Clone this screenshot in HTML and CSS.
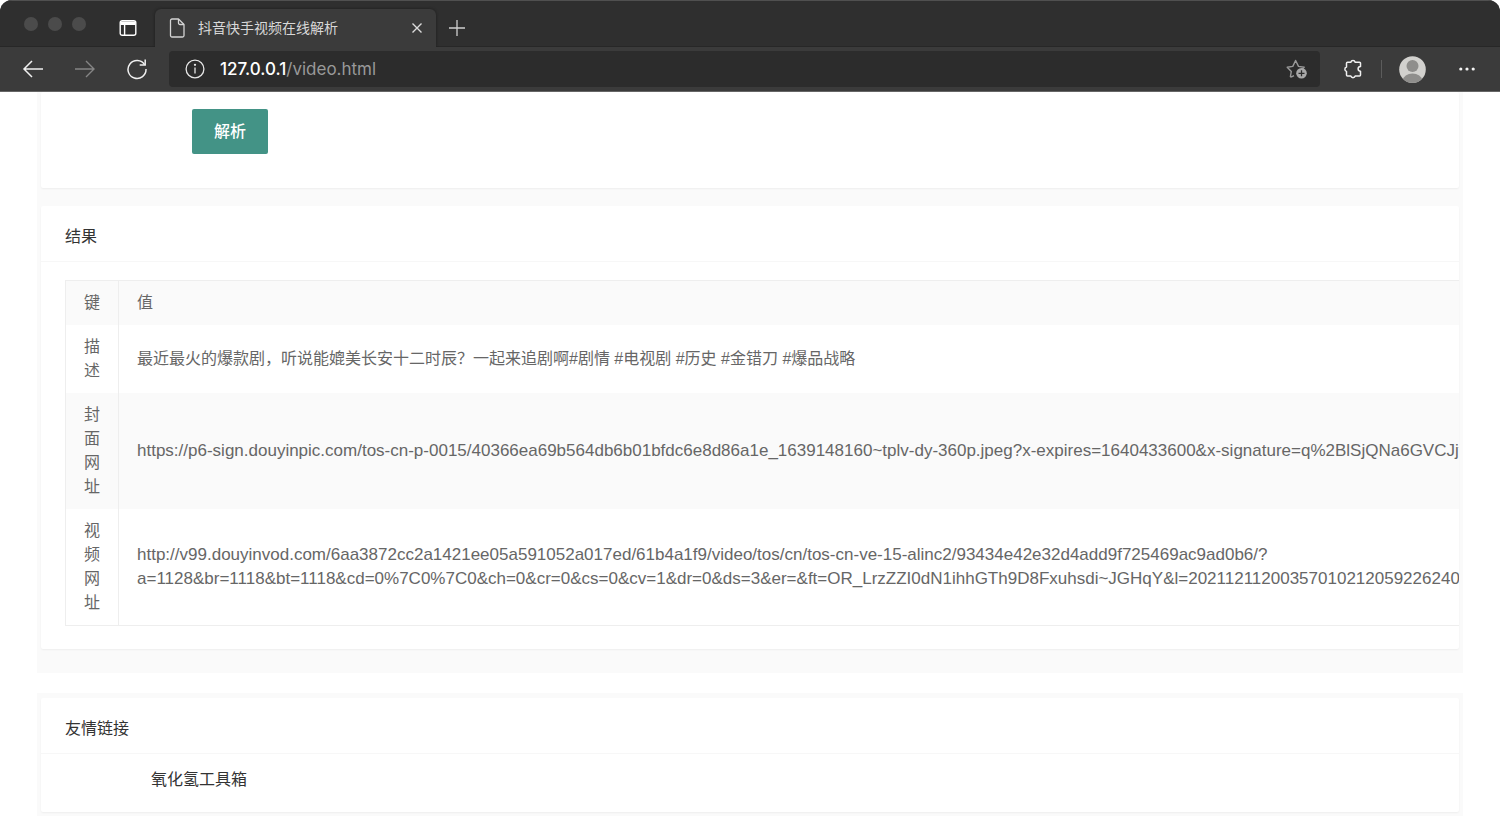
FILE: index.html
```html
<!DOCTYPE html>
<html lang="zh-CN">
<head>
<meta charset="utf-8">
<title>抖音快手视频在线解析</title>
<link rel="stylesheet" href="styles.css">
</head>
<body>
<div class="window">
  <header class="chrome">
    <div class="tabstrip">
      <div class="lights"><span class="light"></span><span class="light"></span><span class="light"></span></div>
      <button class="icon-btn panel-btn" aria-label="标签页操作">
        <svg width="18" height="18" viewBox="0 0 18 18" fill="none" stroke="#fff" stroke-width="1.4"><rect x="1.2" y="1.7" width="15.6" height="14.6" rx="2"/><path d="M1.5 3.5h15M1.5 4.8h15" stroke-width="2.2"/><path d="M5.6 5v11"/></svg>
      </button>
      <div class="tab">
        <svg width="16" height="20" viewBox="0 0 16 20" fill="none" stroke="#d4d4d4" stroke-width="1.3" stroke-linejoin="round"><path d="M3 1h6.5L15 6.500V17.500a1.500 1.500 0 0 1-1.500 1.500H3A1.500 1.500 0 0 1 1.500 17.500V2.500A1.500 1.500 0 0 1 3 1z"/><path d="M9.500 1v4a1.500 1.500 0 0 0 1.500 1.500h4"/></svg>
        <span class="tab-title">抖音快手视频在线解析</span>
        <button class="icon-btn" aria-label="关闭标签页">
          <svg width="12" height="12" viewBox="0 0 12 12" stroke="#dcdcdc" stroke-width="1.4"><path d="M1.500 1.500l9 9M10.500 1.500l-9 9"/></svg>
        </button>
      </div>
      <button class="icon-btn new-tab" aria-label="新建标签页">
        <svg width="18" height="18" viewBox="0 0 18 18" stroke="#cfcfcf" stroke-width="1.3"><path d="M9 1v16M1 9h16"/></svg>
      </button>
    </div>
    <div class="toolbar">
      <div class="nav">
        <button class="icon-btn" aria-label="后退"><svg width="22" height="20" viewBox="0 0 22 20" fill="none" stroke="#f0f0f0" stroke-width="1.5"><path d="M21 10H2M10 2l-8 8 8 8"/></svg></button>
        <button class="icon-btn" aria-label="前进"><svg width="22" height="20" viewBox="0 0 22 20" fill="none" stroke="#858585" stroke-width="1.4"><path d="M1 10h19M12 2l8 8-8 8"/></svg></button>
        <button class="icon-btn" aria-label="刷新"><svg width="22" height="22" viewBox="0 0 22 22" fill="none" stroke="#f0f0f0" stroke-width="1.5"><path d="M18.700 6.800A9 9 0 1 0 20 11"/><path d="M19.200 1.500v5.500h-5.500"/></svg></button>
      </div>
      <div class="address">
        <svg width="20" height="20" viewBox="0 0 20 20" fill="none" stroke="#e6e6e6" stroke-width="1.3"><circle cx="10" cy="10" r="8.900"/><path d="M10 8.500v6"/><circle cx="10" cy="5.800" r=".5" fill="#e6e6e6"/></svg>
        <span class="url"><span class="host">127.0.0.1</span>/video.html</span>
        <button class="icon-btn" aria-label="添加到收藏夹"><svg width="22" height="20" viewBox="0 0 22 20"><path d="M5.200 18.200l-.8-.5.900-5.300L1.200 8.200l5.600-.8L9.600 1.500l2.900 5.900 5.700.8-2 2M5 18.200l3-1.500" fill="none" stroke="#999" stroke-width="1.400" stroke-linejoin="round"/><circle cx="15.500" cy="14.300" r="5.300" fill="#a8a8a8"/><path d="M15.500 11.300v6M12.500 14.300h6" stroke="#2c2c2c" stroke-width="1.300"/></svg></button>
      </div>
      <div class="actions">
        <button class="icon-btn" aria-label="扩展"><svg width="20" height="20" viewBox="0 0 20 20" fill="none" stroke="#f0f0f0" stroke-width="1.500" stroke-linejoin="round"><path d="M4.500 3.200h3.300a2.300 2.300 0 0 1 4.400 0h4.300a1 1 0 0 1 1 1v3.200a2.400 2.400 0 1 0 0 4.800V16a1 1 0 0 1-1 1h-4.300a2.300 2.300 0 0 1-4.400 0H4.500a1 1 0 0 1-1-1v-3.600a2.300 2.300 0 0 1 0-4.400V4.200a1 1 0 0 1 1-1z"/></svg></button>
        <span class="divider"></span>
        <button class="icon-btn" aria-label="个人资料"><svg width="27" height="27" viewBox="0 0 27 27"><clipPath id="face"><circle cx="13.500" cy="13.500" r="13.300"/></clipPath><g clip-path="url(#face)"><rect width="27" height="27" fill="#d2d1ce"/><circle cx="13.500" cy="10" r="6" fill="#8f8e8c"/><ellipse cx="13.500" cy="24" rx="9.500" ry="6.500" fill="#8f8e8c"/></g></svg></button>
        <button class="icon-btn" aria-label="设置及其他"><svg width="18" height="6" viewBox="0 0 18 6" fill="#f4f4f4"><circle cx="2.800" cy="3" r="1.600"/><circle cx="9" cy="3" r="1.600"/><circle cx="15.200" cy="3" r="1.600"/></svg></button>
      </div>
    </div>
  </header>
  <main class="page">
    <div class="panel">
      <section class="card form-card"><button class="submit">解析</button></section>
      <section class="card">
        <h2 class="card-title">结果</h2>
        <div class="result">
          <table class="table">
            <thead><tr><th>键</th><th>值</th></tr></thead>
            <tbody>
              <tr><td>描<br>述</td><td>最近最火的爆款剧，听说能媲美长安十二时辰？一起来追剧啊#剧情 #电视剧 #历史 #金错刀 #爆品战略</td></tr>
              <tr><td>封<br>面<br>网<br>址</td><td class="link-cell">https://p6-sign.douyinpic.com/tos-cn-p-0015/40366ea69b564db6b01bfdc6e8d86a1e_1639148160~tplv-dy-360p.jpeg?x-expires=1640433600&amp;x-signature=q%2BlSjQNa6GVCJjfcW</td></tr>
              <tr><td>视<br>频<br>网<br>址</td><td class="link-cell">http://v99.douyinvod.com/6aa3872cc2a1421ee05a591052a017ed/61b4a1f9/video/tos/cn/tos-cn-ve-15-alinc2/93434e42e32d4add9f725469ac9ad0b6/?<br>a=1128&amp;br=1118&amp;bt=1118&amp;cd=0%7C0%7C0&amp;ch=0&amp;cr=0&amp;cs=0&amp;cv=1&amp;dr=0&amp;ds=3&amp;er=&amp;ft=OR_LrzZZI0dN1ihhGTh9D8Fxuhsdi~JGHqY&amp;l=20211211200357010212059226240AE43</td></tr>
            </tbody>
          </table>
        </div>
      </section>
    </div>
    <div class="panel links-panel">
      <section class="card">
        <h2 class="card-title">友情链接</h2>
        <div class="links"><a href="#">氧化氢工具箱</a></div>
      </section>
    </div>
  </main>
</div>
</body>
</html>
```
FILE: styles.css
```css
* { box-sizing: border-box; }
body {
  margin: 0;
  background: #fff;
  color: #333;
  font: 16px/24px "Liberation Sans", "Noto Sans CJK SC", sans-serif;
}
button { font: inherit; border: 0; cursor: pointer; }
.window { height: 100vh; overflow: hidden; }

.chrome {
  background: #3b3b3b;
  border-radius: 12px 12px 0 0;
  border-bottom: 1px solid #666;
  overflow: hidden;
}
.icon-btn { display: flex; padding: 0; background: none; }
.tabstrip {
  display: flex;
  height: 47px;
  padding-left: 24px;
  background: #2f2f2f;
  border-top: 1px solid #505050;
  box-shadow: inset 0 -1px #272727;
}
.lights { display: flex; gap: 10px; margin-top: 16px; }
.light { width: 14px; height: 14px; border-radius: 50%; background: #4b4b4b; }
.panel-btn { margin: 18px 18px 0 33px; align-self: flex-start; }
.tab {
  display: flex;
  align-items: center;
  width: 281px;
  margin-top: 8px;
  padding: 0 13px 0 14px;
  background: #3b3b3b;
  border-radius: 6px 6px 0 0;
  box-shadow: 0 0 3px #1c1c1c;
}
.tab-title { flex: 1; margin-left: 13px; font-size: 14px; color: #d8d8d8; }
.new-tab { margin: 18px 0 0 12px; align-self: flex-start; }
.toolbar { display: flex; align-items: center; height: 44px; padding: 0 24px 0 22px; background: #3b3b3b; position: relative; }
.nav { display: flex; align-items: center; gap: 30px; }
.address {
  flex: 1;
  display: flex;
  align-items: center;
  height: 36px;
  margin-left: 21px;
  padding: 0 12px 0 16px;
  background: #2c2c2c;
  border-radius: 4px;
}
.url { flex: 1; margin-left: 15px; font-family: Inter, sans-serif; font-size: 17px; color: #999; }
.host { color: #fff; font-weight: 500; }
.actions { display: flex; align-items: center; margin-left: 23px; }
.divider { width: 1px; height: 18px; margin: 0 17px 0 18px; background: #5c5c5c; }
.actions .icon-btn:last-child { margin-left: 32px; }

.page { padding: 0 37px; }
.panel { padding: 0 4px 24px; background: #fafafa; }
.card { background: #fff; border-radius: 2px; box-shadow: 0 1px 2px rgba(0, 0, 0, .05); }
.form-card { padding: 17px 24px 34px 151px; margin-bottom: 18px; }
.submit {
  display: block;
  height: 45px;
  padding: 0 22px;
  color: #fff;
  font-weight: 500;
  background: #439386;
  border-radius: 2px;
}
.card-title {
  margin: 0;
  padding: 19px 24px 12px;
  font-size: 16px;
  font-weight: 400;
  border-bottom: 1px solid #f7f7f7;
}
.result { padding: 18px 0 23px 24px; overflow: hidden; }
.table {
  border-collapse: collapse;
  width: 100%;
  min-width: 1500px;
  color: #666;
  border: 1px solid #eee;
  white-space: nowrap;
}
.table th, .table td { padding: 10px 18px; font-weight: 400; text-align: left; border-right: 1px solid #eee; }
.table th { background: #fafafa; }
.table th:first-child, .table td:first-child { width: 53px; }
.table .link-cell { font-size: 17px; }
.table tbody tr:nth-child(even) { background: #fafafa; }
.links-panel { margin-top: 20px; padding-top: 5px; }
.links { padding: 14px 24px 20px 110px; }
.links a { color: #333; text-decoration: none; }
```
